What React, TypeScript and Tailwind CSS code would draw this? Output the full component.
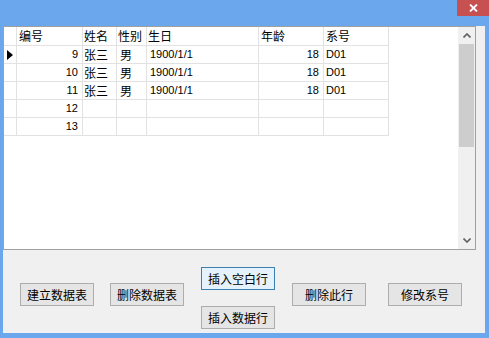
const rows = [
  { id: "9", name: "张三", sex: "男", birth: "1900/1/1", age: "18", dept: "D01", current: true },
  { id: "10", name: "张三", sex: "男", birth: "1900/1/1", age: "18", dept: "D01" },
  { id: "11", name: "张三", sex: "男", birth: "1900/1/1", age: "18", dept: "D01" },
  { id: "12", name: "", sex: "", birth: "", age: "", dept: "" },
  { id: "13", name: "", sex: "", birth: "", age: "", dept: "" },
]

const cjk = "font-['Noto_Sans_CJK_SC','Microsoft_YaHei',sans-serif]"
const latin = "font-['Liberation_Sans','Noto_Sans_CJK_SC',sans-serif]"
const cell = "border-r border-b border-[#e2e2e2] flex items-center shrink-0 overflow-hidden whitespace-nowrap"

function Btn({ label, focused }: { label: string; focused?: boolean }) {
  return (
    <div
      className={`w-[74px] h-[23px] flex items-center justify-center text-[12px] leading-none text-black border ${cjk} ${
        focused ? "border-[#3c7fb1] bg-[#e5f1fb]" : "border-[#adadad] bg-[#e5e5e5]"
      }`}
    >
      {label}
    </div>
  )
}

export default function App() {
  return (
    <div className="w-[489px] h-[338px] bg-[#6ba7ec] flex flex-col overflow-hidden">
      <div className="h-[26px] shrink-0 flex justify-end items-start">
        <div className="w-[32px] h-[16px] bg-[#c75050] flex items-center justify-center">
          <svg width="9" height="8" viewBox="0 0 9 8">
            <path d="M1 0.5 L8 7.5 M8 0.5 L1 7.5" stroke="white" strokeWidth="1.8" />
          </svg>
        </div>
      </div>

      <div className="flex-1 ml-[3px] mr-[4px] mb-[5px] bg-[#f0f0f0] flex flex-col">
        <div className="w-[473px] h-[224px] shrink-0 border border-[#a0a0a0] bg-white flex">
          <div className="flex-1 flex flex-col">
            <div className={`flex h-[19px] text-[12px] text-black ${cjk}`}>
              <div className={`${cell} w-[13px]`} />
              <div className={`${cell} w-[66px] pl-[2px]`}>编号</div>
              <div className={`${cell} w-[34px] pl-[1px]`}>姓名</div>
              <div className={`${cell} w-[30px] pl-[1px]`}>性别</div>
              <div className={`${cell} w-[112px] pl-[1px]`}>生日</div>
              <div className={`${cell} w-[65px] pl-[2px]`}>年龄</div>
              <div className={`${cell} w-[65px] pl-[2px]`}>系号</div>
            </div>
            {rows.map((r) => (
              <div key={r.id} className="flex h-[18px] text-black">
                <div className={`${cell} w-[13px] pl-[3px]`}>
                  {r.current && (
                    <svg width="6" height="10" viewBox="0 0 6 10">
                      <path d="M0 0 L6 5 L0 10 Z" fill="black" />
                    </svg>
                  )}
                </div>
                <div className={`${cell} w-[66px] justify-end pr-[4px] text-[11px] ${latin}`}>{r.id}</div>
                <div className={`${cell} w-[34px] pl-[1px] text-[12px] ${cjk}`}>{r.name}</div>
                <div className={`${cell} w-[30px] pl-[3px] text-[12px] ${cjk}`}>{r.sex}</div>
                <div className={`${cell} w-[112px] pl-[3px] text-[11px] ${latin}`}>{r.birth}</div>
                <div className={`${cell} w-[65px] justify-end pr-[4px] text-[11px] ${latin}`}>{r.age}</div>
                <div className={`${cell} w-[65px] pl-[2px] text-[11px] ${latin}`}>{r.dept}</div>
              </div>
            ))}
          </div>

          <div className="w-[17px] shrink-0 bg-[#f0f0f0] flex flex-col">
            <div className="h-[17px] flex items-center justify-center">
              <svg width="8" height="5" viewBox="0 0 8 5">
                <path d="M0.5 4.5 L4 1 L7.5 4.5" stroke="#606060" strokeWidth="1.6" fill="none" />
              </svg>
            </div>
            <div className="h-[103px] mx-[1px] bg-[#cdcdcd]" />
            <div className="flex-1" />
            <div className="h-[17px] flex items-center justify-center">
              <svg width="8" height="5" viewBox="0 0 8 5">
                <path d="M0.5 0.5 L4 4 L7.5 0.5" stroke="#606060" strokeWidth="1.6" fill="none" />
              </svg>
            </div>
          </div>
        </div>

        <div className="flex items-start pl-[17px]">
          <div className="mt-[33px]">
            <Btn label="建立数据表" />
          </div>
          <div className="mt-[33px] ml-[16px]">
            <Btn label="删除数据表" />
          </div>
          <div className="mt-[17px] ml-[17px] flex flex-col gap-[16px]">
            <Btn label="插入空白行" focused />
            <Btn label="插入数据行" />
          </div>
          <div className="mt-[33px] ml-[17px]">
            <Btn label="删除此行" />
          </div>
          <div className="mt-[33px] ml-[22px]">
            <Btn label="修改系号" />
          </div>
        </div>
      </div>
    </div>
  )
}
